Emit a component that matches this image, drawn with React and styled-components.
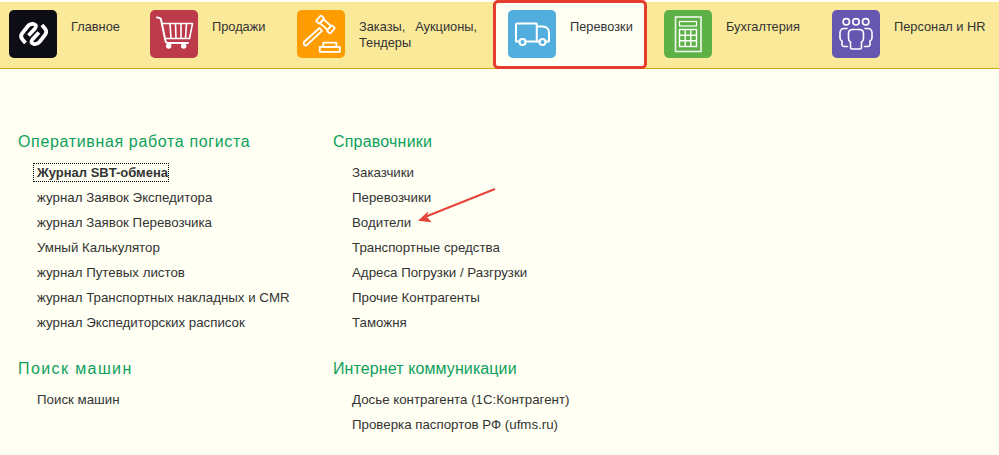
import React from "react";
import styled, { createGlobalStyle } from "styled-components";

const Global = createGlobalStyle`
  html, body { margin: 0; padding: 0; background: #fffff3; }
  body { font-family: "Liberation Sans", Arial, sans-serif; color: #333; }
`;

const Page = styled.div`
  position: relative;
  width: 999px;
  height: 455px;
  overflow: hidden;
  background: #fffff3;
`;

const TopBar = styled.nav`
  display: flex;
  margin-top: 2px;
  height: 66px;
  padding-left: 9px;
  gap: 31px;
  background: #fbe99a;
  border-bottom: 1px solid #c9a90c;
  white-space: nowrap;
`;

const Tab = styled.a`
  position: relative;
  display: flex;
  align-items: flex-start;
  gap: 14px;
  padding-top: 8px;
  &[data-active="true"]::before {
    content: "";
    position: absolute;
    z-index: 0;
    inset: -2px -14px -1px -15px;
    background: #fffff3;
    border: 3px solid #e53c30;
    border-radius: 5px;
  }
`;

const IconBox = styled.span`
  position: relative;
  z-index: 1;
  flex: none;
  width: 48px;
  height: 48px;
  border-radius: 5px;
  background: ${(p) => p.$color};
  svg { display: block; }
`;

const TabLabel = styled.span`
  position: relative;
  z-index: 1;
  font-size: 12.8px;
  line-height: 16px;
  margin-top: 9px;
  color: #333;
  width: ${(p) => p.$width}px;
  white-space: ${(p) => (p.$wrap ? "normal" : "nowrap")};
  text-align: ${(p) => (p.$wrap ? "justify" : "left")};
`;

const Columns = styled.main`
  display: grid;
  grid-template-columns: 315px 1fr;
  padding: 63px 0 0 18px;
`;

const Column = styled.section`
  display: flex;
  flex-direction: column;
`;

const Group = styled.div`
  margin-bottom: 24px;
`;

const Heading = styled.h2`
  margin: 0 0 8px;
  font-size: 16px;
  line-height: 20px;
  font-weight: 400;
  color: #0e9f5c;
  letter-spacing: ${(p) => p.$spacing}px;
`;

const List = styled.ul`
  list-style: none;
  margin: 0;
  padding: 0 0 0 19px;
`;

const Item = styled.li`
  height: 25px;
  line-height: 25px;
  font-size: 13.3px;
  color: #333;
`;

const Current = styled.span`
  font-weight: 700;
  font-size: 13px;
  outline: 1px dotted #000;
  padding: 1px 0 1px 3px;
  margin-left: -3px;
`;

const Arrow = styled.svg`
  position: absolute;
  left: 410px;
  top: 179px;
`;

const W = { fill: "none", stroke: "#fff", strokeWidth: 2, strokeLinejoin: "round", strokeLinecap: "round" };
const Svg = ({ children }) => <svg width="48" height="48" viewBox="0 0 48 48">{children}</svg>;

const HOOK = "M16.5 33 L13.5 29.5 Q11 26.5 13 23.5 L18.5 16.5 Q21 13.5 24.5 14 Q28.5 15 26 18.5 L19.5 25.5";

const Logo = () => (
  <Svg>
    <g fill="none" stroke="#fff" strokeWidth="3.8">
      <path d={HOOK} />
      <path d={HOOK} transform="rotate(180 24.7 24)" />
    </g>
  </Svg>
);

const Cart = () => (
  <Svg>
    <g {...W} strokeWidth="1.6">
      <path strokeWidth="2" d="M7 7.5 Q10.5 7.5 11 9.5 L15.5 31 Q16 33 18 33 H38" />
      <path d="M12.5 13.5 H42.5 L39.5 28.5 H15.5" />
      <path d="M20 13.5 L21 28.5 M25.5 13.5 L26 28.5 M31 13.5 L31 28.5 M36.5 13.5 L35.5 28.5" strokeLinecap="butt" />
    </g>
    <circle cx="18.7" cy="36" r="2.7" fill="#fff" />
    <circle cx="33.7" cy="36" r="2.7" fill="#fff" />
  </Svg>
);

const Gavel = () => (
  <Svg>
    <g {...W} strokeWidth="1.8">
      <path d="M7 32 L22.5 18 L25 20.8 L9.8 35 Q8.5 36 7.2 34.8 Q6.4 33.4 7 32 Z" />
      <g transform="translate(28.5 14.5) rotate(42)">
        <rect x="-5" y="-2.6" width="10" height="5.2" />
        <rect x="-9.5" y="-3.8" width="4.5" height="7.6" rx="1.2" />
        <rect x="5" y="-3.8" width="4.5" height="7.6" rx="1.2" />
      </g>
      <rect x="22.8" y="36.8" width="20" height="5" />
      <rect x="26.3" y="32.7" width="13" height="4.1" />
    </g>
  </Svg>
);

const Truck = () => (
  <Svg>
    <g {...W}>
      <path d="M11.5 31.5 H8.5 Q8 31.5 8 31 V14.5 Q8 13.5 9 13.5 H28 Q28.8 13.5 28.8 14.5 V31.5 H17.5" />
      <path d="M28.8 16.5 H35 Q41 17 41 23 V31 Q41 31.5 40.5 31.5 H37.5 M31.5 31.5 H28.8" />
      <circle cx="14.5" cy="32" r="3" />
      <circle cx="34.5" cy="32" r="3" />
    </g>
  </Svg>
);

const Calc = () => (
  <Svg>
    <g fill="none" stroke="#fff">
      <rect x="11.5" y="7" width="25.5" height="34.5" strokeWidth="1.6" opacity="0.9" />
      <rect x="15.5" y="11.5" width="17" height="4.5" strokeWidth="1.2" />
      <rect x="15.5" y="19.5" width="17" height="17" strokeWidth="1.4" />
      <path d="M21.2 19.5 V36.5 M26.8 19.5 V36.5 M15.5 25.2 H32.5 M15.5 30.8 H32.5" strokeWidth="1.4" />
    </g>
  </Svg>
);

const People = () => (
  <Svg>
    <g {...W} strokeWidth="1.6">
      <circle cx="14.3" cy="11.8" r="3.2" />
      <circle cx="24" cy="11.8" r="3.2" />
      <circle cx="33.7" cy="11.8" r="3.2" />
      <path d="M15 18.5 H12 Q8.5 18.5 8 22.5 V28 Q8 30 10 31 V35 Q10.5 36.5 12 36.5 H15.5" />
      <path d="M33 18.5 H36 Q39.5 18.5 40 22.5 V28 Q40 30 38 31 V35 Q37.5 36.5 36 36.5 H32.5" />
      <path d="M20 39 Q18.5 39 18.5 37.5 V32 Q16.5 31 16.5 28.5 V23 Q17 19.5 20.5 19.5 H27.5 Q31 19.5 31.5 23 V28.5 Q31.5 31 29.5 32 V37.5 Q29.5 39 28 39 Z" />
    </g>
  </Svg>
);

const tabs = [
  { label: "Главное", color: "#0d0d15", Icon: Logo, width: 48 },
  { label: "Продажи", color: "#bc3a4a", Icon: Cart, width: 54 },
  { label: "Заказы, Аукционы, Тендеры", color: "#ff9c00", Icon: Gavel, wrap: true, width: 118 },
  { label: "Перевозки", color: "#52aedd", Icon: Truck, active: true, width: 63 },
  { label: "Бухгалтерия", color: "#5db146", Icon: Calc, width: 75 },
  { label: "Персонал и HR", color: "#6556b0", Icon: People, width: 91 },
];

const left = [
  {
    title: "Оперативная работа погиста",
    spacing: 0.65,
    items: ["Журнал SBT-обмена", "журнал Заявок Экспедитора", "журнал Заявок Перевозчика", "Умный Калькулятор", "журнал Путевых листов", "журнал Транспортных накладных и CMR", "журнал Экспедиторских расписок"],
    current: true,
  },
  { title: "Поиск машин", spacing: 1.4, items: ["Поиск машин"] },
];

const right = [
  { title: "Справочники", spacing: 0.2, items: ["Заказчики", "Перевозчики", "Водители", "Транспортные средства", "Адреса Погрузки / Разгрузки", "Прочие Контрагенты", "Таможня"] },
  { title: "Интернет коммуникации", spacing: 0.1, items: ["Досье контрагента (1С:Контрагент)", "Проверка паспортов РФ (ufms.ru)"] },
];

const renderColumn = (groups) => (
  <Column>
    {groups.map((g) => (
      <Group key={g.title}>
        <Heading $spacing={g.spacing}>{g.title}</Heading>
        <List>
          {g.items.map((it, i) => (
            <Item key={it}>{g.current && i === 0 ? <Current>{it}</Current> : it}</Item>
          ))}
        </List>
      </Group>
    ))}
  </Column>
);

export default function App() {
  return (
    <Page>
      <Global />
      <TopBar>
        {tabs.map(({ label, color, Icon, wrap, active, width }) => (
          <Tab key={label} data-active={active ? "true" : "false"}>
            <IconBox $color={color}><Icon /></IconBox>
            <TabLabel $wrap={wrap} $width={width}>{label}</TabLabel>
          </Tab>
        ))}
      </TopBar>
      <Columns>
        {renderColumn(left)}
        {renderColumn(right)}
      </Columns>
      <Arrow width="90" height="45" viewBox="0 0 90 45">
        <path d="M85 10 L16 37.5" stroke="#e8433a" strokeWidth="2" fill="none" />
        <path d="M8 41.7 L18.3 32.3 L16.7 37.7 L21.7 43.3 Z" fill="#e8433a" />
      </Arrow>
    </Page>
  );
}
